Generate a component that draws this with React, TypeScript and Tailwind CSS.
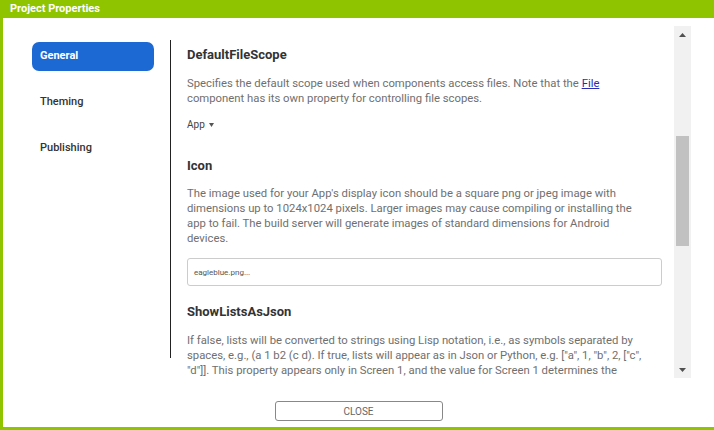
const font = { fontFamily: 'Roboto, "Liberation Sans", sans-serif' };

function SideItem({ label, active }: { label: string; active?: boolean }) {
  return (
    <div
      className={
        active
          ? 'w-[122px] h-[29px] rounded-[7px] bg-[#1c69d3] text-white font-bold text-[11px] pl-[8px] flex items-center'
          : 'w-[122px] h-[29px] text-[#333] font-medium text-[11px] pl-[8px] flex items-center'
      }
    >
      {label}
    </div>
  );
}

function Heading({ children }: { children: string }) {
  return <h3 className="text-[13px] leading-[16px] font-bold text-[#333]">{children}</h3>;
}

function Scrollbar() {
  return (
    <div className="w-[17px] h-full bg-[#f1f1f1] flex flex-col items-center">
      <div className="h-[17px] w-full flex items-center justify-center">
        <svg width="7" height="4" viewBox="0 0 7 4">
          <path d="M3.5 0L7 4H0z" fill="#505050" />
        </svg>
      </div>
      <div className="h-[93px]" />
      <div className="w-[13px] h-[110px] bg-[#c1c1c1]" />
      <div className="flex-1" />
      <div className="h-[17px] w-full flex items-center justify-center">
        <svg width="7" height="4" viewBox="0 0 7 4">
          <path d="M0 0H7L3.5 4z" fill="#505050" />
        </svg>
      </div>
    </div>
  );
}

export default function App() {
  return (
    <div className="w-[714px] h-[430px] bg-[#8fc400] flex flex-col overflow-hidden" style={font}>
      <div className="h-[18px] px-[10px] flex items-center text-white font-bold text-[11px]">
        Project Properties
      </div>
      <div className="flex-1 ml-[3px] mb-[3px] bg-white flex flex-col">
        <div className="flex h-[352px] mt-[8px]">
          <div className="w-[168px] pt-[14px] pl-[29px]">
            <div className="h-[318px] border-r border-[#222] flex flex-col pt-[2px]">
              <SideItem label="General" active />
              <div className="h-[17px]" />
              <SideItem label="Theming" />
              <div className="h-[17px]" />
              <SideItem label="Publishing" />
            </div>
          </div>
          <div className="flex-1 overflow-hidden pl-[16px] pr-[12px] pt-[21px] text-[11.3px] leading-[15px] text-[#6f6f6f]">
            <Heading>DefaultFileScope</Heading>
            <p className="mt-[13px] w-[464px]">
              Specifies the default scope used when components access files. Note that the{' '}
              <a className="text-[#2b2bb5] underline">File</a> component has its own property for
              controlling file scopes.
            </p>
            <div className="mt-[12px] text-[10px] leading-[14px] text-[#444] flex items-center gap-[4px]">
              App
              <svg width="5" height="4" viewBox="0 0 5 4">
                <path d="M0 0H5L2.5 4z" fill="#555" />
              </svg>
            </div>
            <div className="mt-[26px]">
              <Heading>Icon</Heading>
            </div>
            <p className="mt-[12px] w-[464px]">
              The image used for your App's display icon should be a square png or jpeg image with
              dimensions up to 1024x1024 pixels. Larger images may cause compiling or installing the
              app to fail. The build server will generate images of standard dimensions for Android
              devices.
            </p>
            <div className="mt-[12px] h-[28px] border border-[#ccc] rounded-[3px] flex items-center px-[6px] text-[8px] text-[#555]">
              eagleblue.png...
            </div>
            <div className="mt-[18px]">
              <Heading>ShowListsAsJson</Heading>
            </div>
            <p className="mt-[13px] w-[464px]">
              If false, lists will be converted to strings using Lisp notation, i.e., as symbols
              separated by spaces, e.g., (a 1 b2 (c d). If true, lists will appear as in Json or
              Python, e.g. ["a", 1, "b", 2, ["c", "d"]]. This property appears only in Screen 1, and
              the value for Screen 1 determines the behavior for all screens in the app.
            </p>
          </div>
          <Scrollbar />
          <div className="w-[23px]" />
        </div>
        <div className="flex-1 flex justify-center pt-[23px]">
          <button className="w-[168px] h-[20px] border border-[#888] rounded-[3px] text-[10px] text-[#666] bg-white">
            CLOSE
          </button>
        </div>
      </div>
    </div>
  );
}
